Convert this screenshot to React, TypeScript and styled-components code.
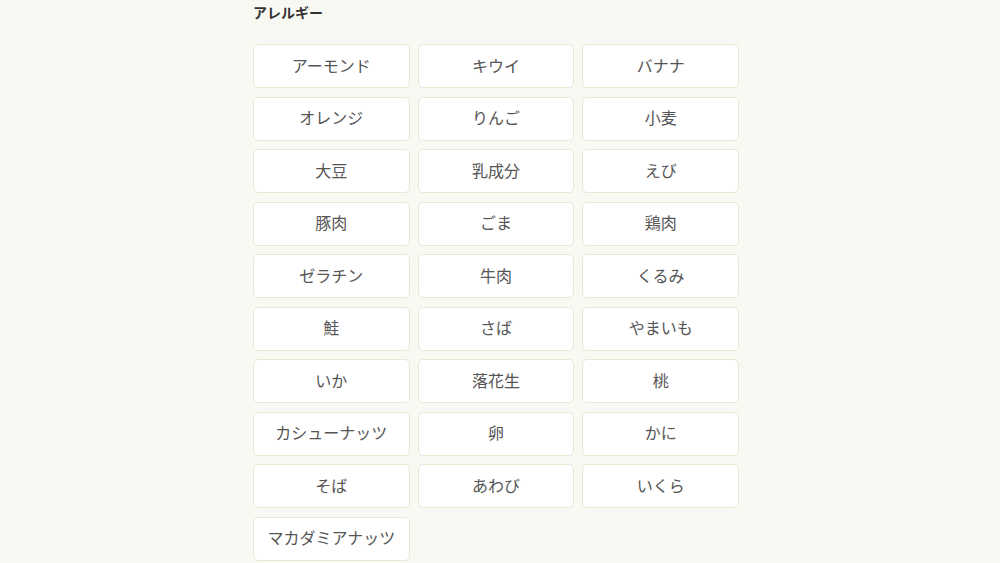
import React from "react";
import styled, { createGlobalStyle } from "styled-components";

const Global = createGlobalStyle`
  html, body { margin: 0; padding: 0; background: #f9f9f3; }
  body { font-family: "Noto Sans CJK JP", "Noto Sans", sans-serif; }
`;

const Page = styled.div`
  width: 1000px;
  height: 563px;
  overflow: hidden;
  display: flex;
  background: #f9f9f3;
`;

const Section = styled.section`
  width: 486px;
  margin-left: 253px;
  padding-top: 2px;
`;

const Title = styled.h2`
  margin: 0 0 22px 0;
  font-size: 14px;
  font-weight: 700;
  line-height: 20px;
  color: #333;
`;

const Grid = styled.div`
  display: grid;
  grid-template-columns: repeat(3, 1fr);
  column-gap: 8px;
  row-gap: 8.5px;
`;

const Chip = styled.button`
  height: 44px;
  box-sizing: border-box;
  background: #ffffff;
  border: 1px solid #e9e7d4;
  border-radius: 5px;
  font-family: inherit;
  font-size: 16px;
  line-height: 1;
  color: #555;
  display: flex;
  align-items: center;
  justify-content: center;
  padding: 0 0 3px 0;
  cursor: pointer;
`;

const items = [
  "アーモンド", "キウイ", "バナナ",
  "オレンジ", "りんご", "小麦",
  "大豆", "乳成分", "えび",
  "豚肉", "ごま", "鶏肉",
  "ゼラチン", "牛肉", "くるみ",
  "鮭", "さば", "やまいも",
  "いか", "落花生", "桃",
  "カシューナッツ", "卵", "かに",
  "そば", "あわび", "いくら",
  "マカダミアナッツ",
];

export default function App() {
  return (
    <>
      <Global />
      <Page>
        <Section>
          <Title>アレルギー</Title>
          <Grid>
            {items.map((t) => (
              <Chip key={t}>{t}</Chip>
            ))}
          </Grid>
        </Section>
      </Page>
    </>
  );
}
